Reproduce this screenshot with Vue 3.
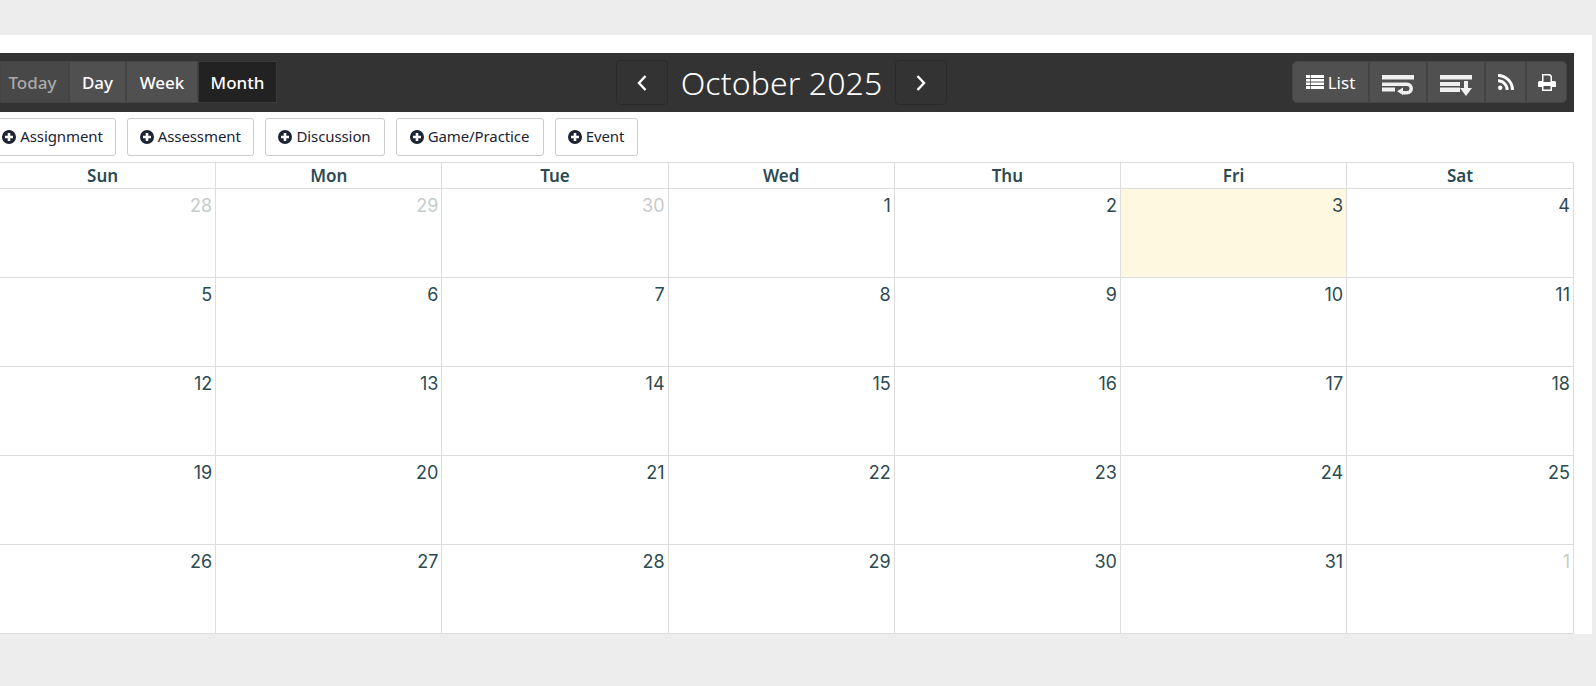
<template>
  <div class="page">
    <div class="panel">
      <div class="toolbar">
        <div class="btn-group">
          <div class="tb-btn tb-btn--today">Today</div>
          <div class="tb-btn tb-btn--day">Day</div>
          <div class="tb-btn tb-btn--week">Week</div>
          <div class="tb-btn tb-btn--active">Month</div>
        </div>
        <div class="nav">
          <div class="nav-btn">
            <svg width="12" height="18" viewBox="0 0 12 18"><path d="M9.500 2 L3 9 L9.500 16" fill="none" stroke="#fff" stroke-width="2.400" /></svg>
          </div>
          <div class="title">October 2025</div>
          <div class="nav-btn">
            <svg width="12" height="18" viewBox="0 0 12 18"><path d="M2.500 2 L9 9 L2.500 16" fill="none" stroke="#fff" stroke-width="2.400" /></svg>
          </div>
        </div>
        <div class="btn-group btn-group--right">
          <div class="tool tool--list">
            <svg width="18" height="14" viewBox="0 0 18 14"><path d="M0 0h18v3H0zM0 4h18v2.500H0zM0 7.500h18V10H0zM0 11h18v3H0z" fill="#fff" /><path d="M4 0h.8v14H4z" fill="#555" /></svg>
            <span>List</span>
          </div>
          <div class="tool tool--wide">
            <svg class="low-icon" width="32" height="20" viewBox="0 0 32 20"><path d="M0 0h32v4.500H0zM0 7.500h25a6 6 0 0 1 0 12h-5v-3.500h5a2.500 2.500 0 0 0 0-5H0zM0 12.500h13V16.500H0z" fill="#f0f0f0" /><path d="M21 12.500V20l-6-3.750z" fill="#f0f0f0" /></svg>
          </div>
          <div class="tool tool--wide">
            <svg class="low-icon" width="32" height="21" viewBox="0 0 32 21"><path d="M0 0h32v4.500H0zM0 7h20v4H0zM0 12.500h20v4.500H0zM24 6h4v7h4l-6 8-6-8h4z" fill="#f0f0f0" /></svg>
          </div>
          <div class="tool tool--small">
            <svg width="16" height="16" viewBox="0 0 16 16"><circle cx="2.200" cy="13.800" r="2.200" fill="#fff" /><path d="M0 5.300v3a7.700 7.700 0 0 1 7.700 7.700h3A10.700 10.700 0 0 0 0 5.300z" fill="#fff" /><path d="M0 0v3a13 13 0 0 1 13 13h3A16 16 0 0 0 0 0z" fill="#fff" /></svg>
          </div>
          <div class="tool tool--small">
            <svg width="18" height="17" viewBox="0 0 18 17"><path d="M4 0h8l2 2v5h2.500A1.500 1.500 0 0 1 18 8.500V13h-4v4H4v-4H0V8.500A1.500 1.500 0 0 1 1.500 7H4zM5.500 1.500V8h7V2.800l-1.300-1.300zM5.500 12v3.500h7V12z" fill="#fff" fill-rule="evenodd" /></svg>
          </div>
        </div>
      </div>

      <div class="add-row">
        <div
          v-for="a in addButtons"
          :key="a.label"
          class="add-btn"
          :style="{ width: a.width + 'px' }"
        >
          <svg width="14" height="14" viewBox="0 0 14 14"><circle cx="7" cy="7" r="7" fill="#1c2433" /><path d="M5.700 3h2.600v2.700H11v2.600H8.300V11H5.700V8.300H3V5.700h2.700z" fill="#fff" /></svg>
          <span>{{ a.label }}</span>
        </div>
      </div>

      <div class="cal">
        <div v-for="d in dayNames" :key="d" class="head">{{ d }}</div>
        <div
          v-for="(c, i) in cells"
          :key="i"
          class="cell"
          :class="{ 'cell--other': c.other, 'cell--today': c.today }"
        >{{ c.n }}</div>
      </div>
    </div>
  </div>
</template>

<script setup>
const addButtons = [
  { label: 'Assignment', width: 127 },
  { label: 'Assessment', width: 126.5 },
  { label: 'Discussion', width: 120 },
  { label: 'Game/Practice', width: 148 },
  { label: 'Event', width: 83 },
]
const dayNames = ['Sun', 'Mon', 'Tue', 'Wed', 'Thu', 'Fri', 'Sat']

const cells = []
for (const n of [28, 29, 30]) cells.push({ n, other: true })
for (let n = 1; n <= 31; n++) cells.push({ n, today: n === 3 })
cells.push({ n: 1, other: true })
</script>

<style>
html, body { margin: 0; background: #ededed; overflow: hidden; }
</style>

<style scoped>
.page {
  width: 1596px;
  height: 686px;
  padding-top: 35px;
  box-sizing: border-box;
  overflow: hidden;
  background: #ededed;
  font-family: 'Noto Sans', 'Open Sans', sans-serif;
}
.panel {
  width: 1592px;
  height: 599px;
  background: #fff;
  padding-top: 18px;
  box-sizing: border-box;
}
.toolbar {
  margin-left: -11px;
  width: 1585px;
  height: 59px;
  background: #333;
  box-sizing: border-box;
  padding: 8px 7px 0 11px;
  display: flex;
  justify-content: space-between;
  align-items: flex-start;
  position: relative;
}
.btn-group {
  display: flex;
  height: 42px;
}
.tb-btn {
  height: 42px;
  box-sizing: border-box;
  display: flex;
  align-items: center;
  justify-content: center;
  font-size: 17px;
  font-weight: 500;
  color: #fff;
  background: #505050;
  border: 1px solid #444;
}
.tb-btn--today { width: 69px; padding-right: 4px; color: #aaa; background: #484848; }
.tb-btn--day { width: 57px; }
.tb-btn--week { width: 72px; }
.tb-btn--active { width: 79px; background: #222; border-color: #3a3a3a; }
.nav {
  position: absolute;
  left: 627px;
  top: 7px;
  display: flex;
  align-items: center;
}
.nav-btn {
  width: 52px;
  height: 45px;
  box-sizing: border-box;
  border: 1px solid #2a2a2a;
  border-radius: 4px;
  display: flex;
  align-items: center;
  justify-content: center;
}
.title {
  width: 227px;
  text-align: center;
  color: #fff;
  font-size: 32px;
  font-weight: 300;
  letter-spacing: 0.1px;
}
.btn-group--right {
  background: #505050;
  border-radius: 5px;
  border: 1px solid #444;
  box-sizing: border-box;
}
.tool {
  box-sizing: border-box;
  display: flex;
  align-items: center;
  justify-content: center;
  gap: 4px;
  color: #fff;
  font-size: 17px;
  border-left: 2px solid #444;
}
.tool--list { width: 75px; border-left: 0; }
.tool--wide { width: 58px; }
.tool--small { width: 41px; }
.low-icon { margin-top: 6px; }
.add-row {
  display: flex;
  gap: 11px;
  margin-left: -11px;
  padding-top: 6px;
  height: 50px;
  box-sizing: border-box;
}
.add-btn {
  height: 38px;
  box-sizing: border-box;
  border: 1px solid #ccc;
  border-radius: 3px;
  background: #fff;
  padding: 0 0 2px;
  display: flex;
  align-items: center;
  justify-content: center;
  gap: 4px;
  font-size: 15px;
  letter-spacing: -0.1px;
  color: #1c2433;
}
.add-btn svg { margin-top: 2px; }
.cal {
  margin-left: -11px;
  width: 1585px;
  display: grid;
  grid-template-columns: repeat(6, 226.200px) 1fr;
  grid-template-rows: 26px repeat(5, 89px);
  border-top: 1px solid #ddd;
  border-left: 1px solid #ddd;
  box-sizing: border-box;
}
.head {
  border-right: 1px solid #ddd;
  border-bottom: 1px solid #ddd;
  text-align: center;
  font-size: 17px;
  font-weight: 600;
  line-height: 26px;
  color: #2c4a52;
}
.cell {
  border-right: 1px solid #ddd;
  border-bottom: 1px solid #ddd;
  text-align: right;
  padding: 4px 3px 0 0;
  font-size: 18px;
  line-height: 26px;
  color: #2c4a52;
  font-family: 'Inter', sans-serif;
  font-weight: 400;
}
.cell--other { color: #c5cccc; }
.cell--today { background: #fef8e0; }
</style>
